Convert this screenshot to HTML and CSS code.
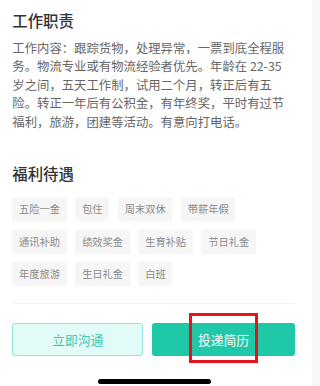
FILE: index.html
```html
<!DOCTYPE html>
<html lang="zh-CN">
<head>
<meta charset="utf-8">
<title>职位详情</title>
<link rel="stylesheet" href="styles.css">
</head>
<body>
<div class="screen">
  <main class="page">
    <section class="duty">
      <h2 class="title">工作职责</h2>
      <p class="desc">工作内容：跟踪货物，处理异常，一票到底全程服<br>务。物流专业或有物流经验者优先。年龄在 22-35<br>岁之间，五天工作制，试用二个月，转正后有五<br>险。转正一年后有公积金，有年终奖，平时有过节<br>福利，旅游，团建等活动。有意向打电话。</p>
    </section>
    <section class="welfare">
      <h2 class="title">福利待遇</h2>
      <ul class="tags">
        <li class="tag">五险一金</li>
        <li class="tag">包住</li>
        <li class="tag">周末双休</li>
        <li class="tag">带薪年假</li>
        <li class="tag">通讯补助</li>
        <li class="tag">绩效奖金</li>
        <li class="tag">生育补贴</li>
        <li class="tag">节日礼金</li>
        <li class="tag">年度旅游</li>
        <li class="tag">生日礼金</li>
        <li class="tag">白班</li>
      </ul>
    </section>
    <div class="divider"></div>
    <div class="actions">
      <button class="btn btn-chat">立即沟通</button>
      <button class="btn btn-apply">投递简历<span class="highlight"></span></button>
    </div>
    <div class="home-indicator"></div>
  </main>
  <aside class="rail"></aside>
</div>
</body>
</html>
```

FILE: styles.css
```css
* { box-sizing: border-box; }
html, body {
  margin: 0;
  padding: 0;
  background: #ffffff;
}
body {
  font-family: "Noto Sans CJK SC", "Noto Sans", sans-serif;
  width: 320px;
  height: 386px;
  overflow: hidden;
}
.screen {
  display: flex;
  width: 320px;
  height: 386px;
}
.page {
  position: relative;
  width: 312px;
  padding: 9px 16.7px 0 12.3px;
}
.rail {
  width: 8px;
  background: #f6f7f9;
}
.title {
  margin: 0;
  font-size: 15.4px;
  line-height: 22px;
  font-weight: 500;
  color: #333333;
}
.desc {
  margin: 8px 0 0;
  font-size: 12.37px;
  line-height: 18.4px;
  color: #666666;
  white-space: nowrap;
}
.welfare {
  margin-top: 31px;
}
.tags {
  list-style: none;
  margin: 13.3px 0 0;
  padding: 0;
  display: flex;
  flex-wrap: wrap;
  gap: 8.5px 8.5px;
}
.tag {
  height: 24px;
  padding: 0 6.8px;
  font-size: 10.24px;
  line-height: 24px;
  color: #8a8a8a;
  background: #f6f6f6;
  border-radius: 2px;
}
.divider {
  margin-top: 17px;
  height: 1px;
  background: #f1f2f3;
}
.actions {
  display: flex;
  gap: 8.4px;
  margin-top: 19px;
}
.btn {
  height: 32.3px;
  border-radius: 3px;
  font-family: inherit;
  font-size: 12.8px;
  padding: 0;
  cursor: pointer;
}
.btn-chat {
  width: 131px;
  background: #e2fbf7;
  border: 1px solid #8fe3d8;
  color: #3ec6b2;
}
.btn-apply {
  position: relative;
  flex: 1;
  background: #1fc8a6;
  border: none;
  color: #ffffff;
}
.highlight {
  position: absolute;
  left: 37px;
  top: -10.7px;
  width: 69.5px;
  height: 50px;
  border: 3px solid #e4141b;
}
.home-indicator {
  position: absolute;
  left: 98.3px;
  top: 379.3px;
  width: 112.4px;
  height: 5px;
  border-radius: 3px;
  background: #000000;
}
```
